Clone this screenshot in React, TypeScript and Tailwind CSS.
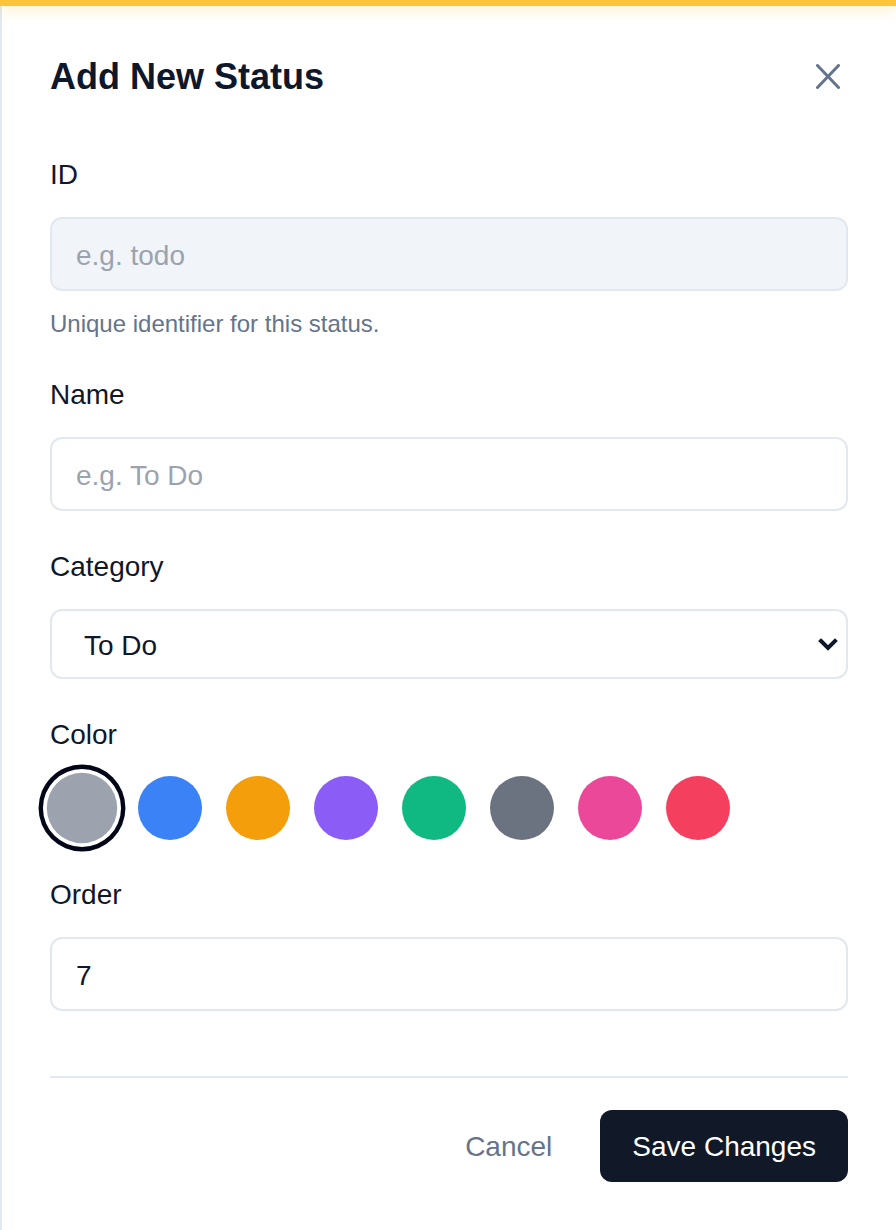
import React from "react";

const swatches = [
  "#9ca3af",
  "#3b82f6",
  "#f59e0b",
  "#8b5cf6",
  "#10b981",
  "#6b7280",
  "#ec4899",
  "#f43f5e",
];

function Label({ children, className = "" }: { children: React.ReactNode; className?: string }) {
  return (
    <div className={`text-[28px] leading-[40px] text-[#0f172a] ${className}`}>{children}</div>
  );
}

export default function App() {
  return (
    <div className="w-[896px] min-h-[1230px] bg-white font-['Liberation_Sans',Arial,sans-serif] flex flex-col">
      <div className="relative z-10 h-[6px] bg-[#fcc43a] shadow-[0_4px_12px_rgba(252,196,58,0.35)]" />
      <div className="flex-1 border-l-2 border-[#e2e8f0] px-[48px] pt-[46px] pb-[48px] flex flex-col">
        <div className="h-[48px] flex items-center justify-between">
          <h1 className="text-[36px] leading-[48px] pt-[2px] font-bold text-[#0f172a]">Add New Status</h1>
          <button className="w-[40px] h-[40px] flex items-center justify-center">
            <svg width="24" height="25" viewBox="0 0 24 25" fill="none">
              <path d="M1.5 1.5 L22.5 23.5 M22.5 1.5 L1.5 23.5" stroke="#64748b" strokeWidth="3" strokeLinecap="round" />
            </svg>
          </button>
        </div>

        <Label className="mt-[55px]">ID</Label>
        <input
          className="mt-[22px] h-[74px] w-full rounded-[12px] border-2 border-[#e2e8f0] bg-[#f1f5f9] px-[24px] pt-[4px] text-[28px] text-[#0f172a] placeholder:text-[#9ca3af] outline-none"
          placeholder="e.g. todo"
          readOnly
        />
        <div className="mt-[16px] text-[24px] leading-[34px] text-[#64748b]">Unique identifier for this status.</div>

        <Label className="mt-[34px]">Name</Label>
        <input
          className="mt-[22px] h-[74px] w-full rounded-[12px] border-2 border-[#e2e8f0] bg-white px-[24px] pt-[4px] text-[28px] text-[#0f172a] placeholder:text-[#9ca3af] outline-none"
          placeholder="e.g. To Do"
        />

        <Label className="mt-[36px]">Category</Label>
        <div className="mt-[22px] h-[70px] w-full rounded-[12px] border-2 border-[#e2e8f0] bg-white pl-[32px] pr-[8px] flex items-center justify-between">
          <span className="text-[28px] text-[#0f172a] pt-[3px]">To Do</span>
          <svg width="20" height="13" viewBox="0 0 20 13" fill="none">
            <path d="M3 3 L10 10 L17 3" stroke="#0f172a" strokeWidth="4" strokeLinecap="square" strokeLinejoin="miter" />
          </svg>
        </div>

        <Label className="mt-[36px]">Color</Label>
        <div className="mt-[21px] h-[64px] flex items-center gap-[24px]">
          {swatches.map((c, i) => (
            <div
              key={c + i}
              className={
                i === 0
                  ? "w-[64px] h-[64px] rounded-full scale-110 shadow-[0_0_0_3.5px_#ffffff,0_0_0_7.5px_#020617]"
                  : "w-[64px] h-[64px] rounded-full"
              }
              style={{ backgroundColor: c }}
            />
          ))}
        </div>

        <Label className="mt-[35px]">Order</Label>
        <input
          className="mt-[22px] h-[74px] w-full rounded-[12px] border-2 border-[#e2e8f0] bg-white px-[24px] pt-[4px] text-[28px] text-[#0f172a] outline-none"
          defaultValue="7"
        />

        <div className="mt-[65px] h-[2px] bg-[#e2e8f0]" />

        <div className="mt-[32px] flex justify-end items-center gap-[16px]">
          <button className="h-[72px] px-[32px] pt-[2px] text-[28px] text-[#64748b]">Cancel</button>
          <button className="h-[72px] px-[32px] pt-[2px] rounded-[12px] bg-[#111827] text-[28px] text-white">Save Changes</button>
        </div>
      </div>
    </div>
  );
}
